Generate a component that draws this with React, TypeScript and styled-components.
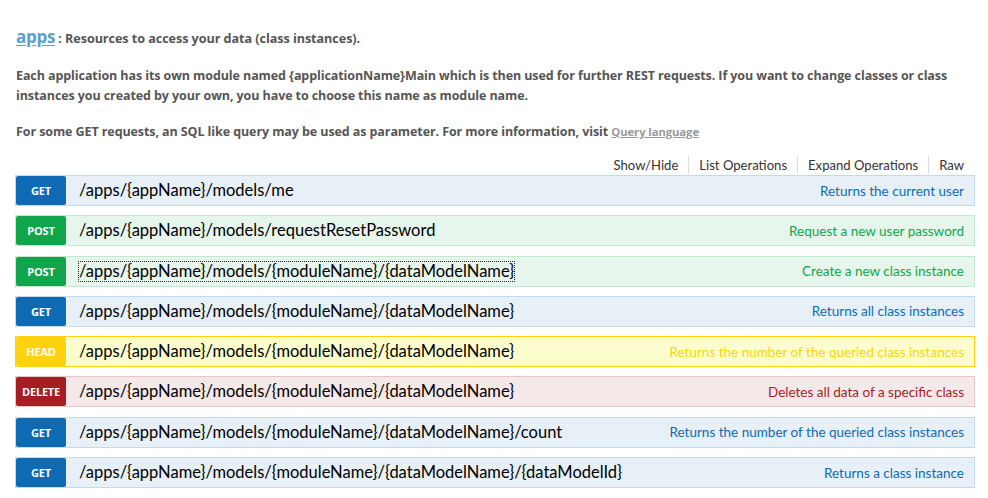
import React from 'react';
import styled, { createGlobalStyle } from 'styled-components';

type Method = 'get' | 'post' | 'head' | 'delete';

const palette: Record<Method, { badge: string; bg: string; border: string; text: string }> = {
    get: { badge: '#0f6ab4', bg: '#e7f0f7', border: '#c3d9ec', text: '#0f6ab4' },
    post: { badge: '#10a54a', bg: '#e7f6ec', border: '#c3e8d1', text: '#10a54a' },
    head: { badge: '#ffd20f', bg: '#fcffcd', border: '#ffd20f', text: '#ffd20f' },
    delete: { badge: '#a41e22', bg: '#f5e8e8', border: '#e8c6c7', text: '#a41e22' },
};

const operations: { method: Method; path: string; summary: string; focused?: boolean }[] = [
    { method: 'get', path: '/apps/{appName}/models/me', summary: 'Returns the current user' },
    { method: 'post', path: '/apps/{appName}/models/requestResetPassword', summary: 'Request a new user password' },
    { method: 'post', path: '/apps/{appName}/models/{moduleName}/{dataModelName}', summary: 'Create a new class instance', focused: true },
    { method: 'get', path: '/apps/{appName}/models/{moduleName}/{dataModelName}', summary: 'Returns all class instances' },
    { method: 'head', path: '/apps/{appName}/models/{moduleName}/{dataModelName}', summary: 'Returns the number of the queried class instances' },
    { method: 'delete', path: '/apps/{appName}/models/{moduleName}/{dataModelName}', summary: 'Deletes all data of a specific class' },
    { method: 'get', path: '/apps/{appName}/models/{moduleName}/{dataModelName}/count', summary: 'Returns the number of the queried class instances' },
    { method: 'get', path: '/apps/{appName}/models/{moduleName}/{dataModelName}/{dataModelId}', summary: 'Returns a class instance' },
];

const moduleNote =
    'Each application has its own module named {applicationName}Main which is then used for further REST requests. If you want to change classes or class instances you created by your own, you have to choose this name as module name.';

const App: React.FC = () => {
    return (
        <>
            <GlobalStyle />
            <Resource>
                <Heading>
                    <ResourceName href="#">apps</ResourceName>
                    <span> : Resources to access your data (class instances).</span>
                </Heading>
                <Paragraph>{moduleNote}</Paragraph>
                <Paragraph>
                    For some GET requests, an SQL like query may be used as parameter. For more information, visit <QueryLink href="#">Query language</QueryLink>
                </Paragraph>
                <Options>
                    <li>Show/Hide</li>
                    <li>List Operations</li>
                    <li>Expand Operations</li>
                    <li>Raw</li>
                </Options>
                <OperationList>
                    {operations.map((op, i) => (
                        <Operation key={i} $method={op.method}>
                            <Badge $method={op.method}>{op.method}</Badge>
                            <Path $focused={op.focused}>{op.path}</Path>
                            <Summary $method={op.method}>{op.summary}</Summary>
                        </Operation>
                    ))}
                </OperationList>
            </Resource>
        </>
    );
};

export default App;

const GlobalStyle = createGlobalStyle`
    html, body {
        margin: 0;
        padding: 0;
        background: #fff;
    }
    body {
        font-family: "Open Sans", "DejaVu Sans", sans-serif;
    }
`;

const Resource = styled.div`
    padding: 26px 13px 0 15px;
`;

const Heading = styled.h2`
    margin: 0 0 0 1px;
    font-size: 12.6px;
    font-weight: 700;
    color: #555;
    line-height: 22px;
    letter-spacing: -0.05px;
`;

const ResourceName = styled.a`
    font-size: 17px;
    color: #5e9fcb;
    text-decoration: underline;
    text-underline-offset: 2px;
    letter-spacing: -0.3px;
`;

const Paragraph = styled.p`
    margin: 16px 0 0 1px;
    font-size: 12.5px;
    font-weight: 700;
    line-height: 20px;
    color: #555;
    letter-spacing: -0.09px;
`;

const QueryLink = styled.a`
    font-size: 11.3px;
    color: #999;
    text-decoration: underline;
`;

const Options = styled.ul`
    list-style: none;
    margin: 14px 11px 0 0;
    padding: 0;
    display: flex;
    justify-content: flex-end;
    font-family: "Lato", sans-serif;
    font-size: 13.1px;
    color: #333;

    li {
        padding: 0 10px;
        line-height: 18px;
        border-left: 1px solid #ddd;
    }

    li:first-child {
        border-left: none;
    }

    li:last-child {
        padding-right: 0;
    }
`;

const OperationList = styled.div`
    margin-top: 1px;
    display: flex;
    flex-direction: column;
    gap: 9.3px;
`;

const Operation = styled.div<{ $method: Method }>`
    display: flex;
    align-items: center;
    height: 29px;
    border: 1px solid ${(p) => palette[p.$method].border};
    background: ${(p) => palette[p.$method].bg};
`;

const Badge = styled.span<{ $method: Method }>`
    flex: 0 0 50px;
    height: 29px;
    display: flex;
    align-items: center;
    justify-content: center;
    border-radius: 2px;
    background: ${(p) => palette[p.$method].badge};
    color: #fff;
    font-family: "Open Sans", sans-serif;
    font-weight: 700;
    font-size: 11px;
    text-transform: uppercase;
    letter-spacing: -0.2px;
`;

const Path = styled.span<{ $focused?: boolean }>`
    margin-left: 13px;
    font-family: "Lato", sans-serif;
    font-size: 16.5px;
    color: #000;
    line-height: 19px;
    outline: ${(p) => (p.$focused ? '1px dotted #222' : 'none')};
`;

const Summary = styled.span<{ $method: Method }>`
    margin-left: auto;
    padding-right: 10px;
    font-family: "Lato", sans-serif;
    font-size: 13.5px;
    color: ${(p) => palette[p.$method].text};
`;
